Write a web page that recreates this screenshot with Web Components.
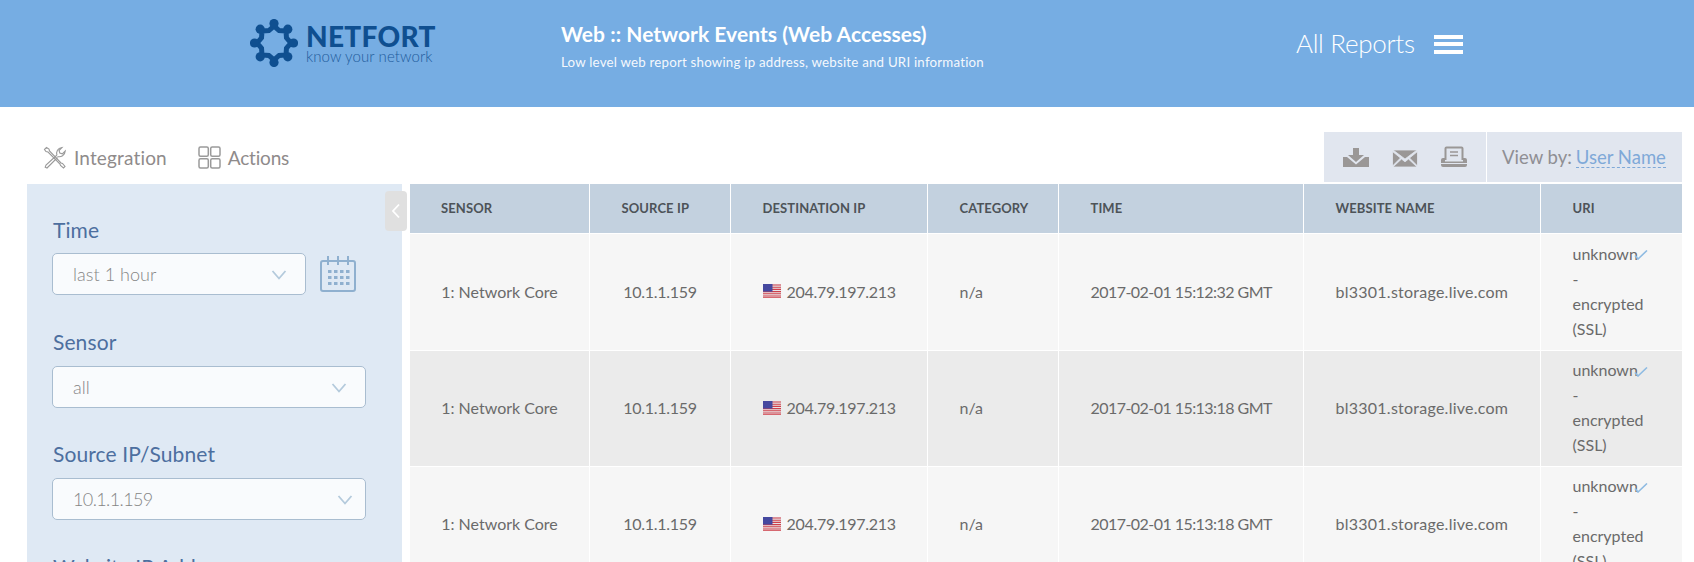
<!DOCTYPE html>
<html>
<head>
<meta charset="utf-8">
<title>Netfort</title>
<style>
	html, body { margin: 0; padding: 0; height: 562px; overflow: hidden; background: #fff; }
	body { font-family: "Lato", "Liberation Sans", sans-serif; }
</style>
</head>
<body>
<net-page>
	<net-header slot="header"
		heading="Web :: Network Events (Web Accesses)"
		sub="Low level web report showing ip address, website and URI information"></net-header>
	<net-toolbar slot="toolbar"></net-toolbar>
	<net-sidebar slot="sidebar">
		<net-field label="Time" value="last 1 hour" width="254" chevron="18" calendar></net-field>
		<net-field label="Sensor" value="all" width="314" chevron="18"></net-field>
		<net-field label="Source IP/Subnet" value="10.1.1.159" width="314" chevron="12" tight></net-field>
		<net-field label="Website IP Address" value="" width="314" chevron="12"></net-field>
	</net-sidebar>
	<net-table slot="table"></net-table>
</net-page>

<script>
class NetPage extends HTMLElement {

	constructor(){
		super();
		this.shadowDOM = this.attachShadow({
			mode: 'open'
		})
	}

	connectedCallback(){
		this.shadowDOM.innerHTML = `
			<style>
				:host { display: block; height: 562px; overflow: hidden; }
				.main { padding: 25px 12px 0 27px; }
				.content {
					display: flex;
					gap: 8px;
					margin-top: 2px;
					position: relative;
				}
				.toggle {
					position: absolute;
					left: 358px;
					top: 7px;
					width: 22px;
					height: 40px;
					border-radius: 4px;
					background: #e0e0e0;
					display: flex;
					align-items: center;
					justify-content: center;
				}
				.toggle svg { width: 10px; height: 16px; }
			</style>
			<slot name="header"></slot>
			<div class="main">
				<slot name="toolbar"></slot>
				<div class="content">
					<slot name="sidebar"></slot>
					<slot name="table"></slot>
					<div class="toggle">
						<svg viewBox="0 0 10 16"><path d="M8 1.5 2 8l6 6.5" fill="none" stroke="#fff" stroke-width="1.8"/></svg>
					</div>
				</div>
			</div>
		`
	}
}

class NetHeader extends HTMLElement {

	constructor(){
		super();
		this.shadowDOM = this.attachShadow({
			mode: 'open'
		})
	}

	connectedCallback(){
		// logo gear: ring plus eight knobs, built here to keep the markup short
		let knobs = ''
		for (let i = 0; i < 8; i++) {
			let a = i * Math.PI / 4
			let x = (24 + 19.5 * Math.sin(a)).toFixed(2)
			let y = (24 - 19.5 * Math.cos(a)).toFixed(2)
			knobs += `<circle cx="${x}" cy="${y}" r="4.6"/>`
		}
		let ring = ''
		for (let i = 0; i < 16; i++) {
			let a = i * Math.PI / 8
			let r = i % 2 ? 13.5 : 17
			ring += (24 + r * Math.sin(a)).toFixed(2) + ',' + (24 - r * Math.cos(a)).toFixed(2) + ' '
		}
		this.shadowDOM.innerHTML = `
			<style>
				:host {
					display: grid;
					grid-template-columns: 311px 735px auto;
					align-items: start;
					height: 107px;
					padding-left: 250px;
					box-sizing: border-box;
					background: #76ade3;
					color: #fff;
				}
				.logo { display: flex; gap: 8px; padding-top: 19px; color: #0f4f90; }
				.logo svg { width: 48px; height: 48px; flex: none; }
				.brand {
					font-size: 28px;
					font-weight: 900;
					letter-spacing: .3px;
					line-height: 22px;
					margin-top: 6px;
				}
				.tag { font-size: 15px; font-weight: 300; line-height: 17px; letter-spacing: .1px; margin-top: 1px; color: #1f5c9c; }
				.title { padding-top: 20px; }
				h1 { margin: 0; font-size: 21px; font-weight: 700; line-height: 28px; letter-spacing: .05px; }
				p { margin: 5px 0 0; font-size: 13.3px; font-weight: 400; line-height: 18px; letter-spacing: .21px; color: #f4f8fd; }
				.reports { display: flex; align-items: center; gap: 19px; padding-top: 25px; }
				.reports span { font-size: 26px; font-weight: 300; line-height: 36px; letter-spacing: -.3px; }
				.burger { width: 29px; display: grid; gap: 3.5px; margin-top: 2px; }
				.burger i { display: block; height: 4px; background: #fff; }
			</style>
			<div class="logo">
				<svg viewBox="0 0 48 48" fill="currentColor">
					<polygon points="${ring}" fill="none" stroke="currentColor" stroke-width="5"/>
					${knobs}
				</svg>
				<div>
					<div class="brand">NETFORT</div>
					<div class="tag">know your network</div>
				</div>
			</div>
			<div class="title">
				<h1>${this.getAttribute('heading')}</h1>
				<p>${this.getAttribute('sub')}</p>
			</div>
			<div class="reports">
				<span>All Reports</span>
				<div class="burger"><i></i><i></i><i></i></div>
			</div>
		`
	}
}

class NetToolbar extends HTMLElement {

	constructor(){
		super();
		this.shadowDOM = this.attachShadow({
			mode: 'open'
		})
	}

	connectedCallback(){
		this.shadowDOM.innerHTML = `
			<style>
				:host { display: flex; height: 50px; }
				.tabs {
					display: flex;
					gap: 31px;
					flex: 1;
					padding: 14px 0 0 16px;
					color: #8f8b8b;
					font-size: 19px;
					letter-spacing: .15px;
				}
				.tab { display: flex; align-items: center; gap: 8px; height: 22px; }
				.tab + .tab { letter-spacing: -.2px; gap: 7px; }
				.tab svg { width: 23px; height: 23px; flex: none; margin-top: 1px; }
				.box {
					background: #e1e6ef;
					display: flex;
					align-items: center;
					height: 50px;
				}
				.icons { width: 162px; gap: 23px; padding-left: 19px; box-sizing: border-box; margin-right: 1px; }
				.icons svg { height: 22px; width: 26px; flex: none; }
				.view { width: 195px; padding-left: 15px; box-sizing: border-box; color: #8f8f94; font-size: 18.5px; white-space: nowrap; }
				.view b { font-weight: 400; color: #7fa9d8; border-bottom: 1px dashed #7fa9d8; margin-left: 4px; line-height: 20px; }
			</style>
			<div class="tabs">
				<div class="tab">
					<svg viewBox="0 0 23 23" fill="none" stroke="#9a9a9a" stroke-width="1.1">
						<path d="M1.5 3.5 3.5 1.5 6 3l.5 2 11.5 12 1.500.5 2.500 3-1.500 1.500-3-2.500-.5-1.500L5 6 3 5.500z"/>
						<path d="M14 9 3 19l-.8 2.200 1.800.8L14.500 11.500M14 9c-1-3 .5-7 5-7.500l-3 3 .8 2.500 2.500.8 3-3c-.3 4.700-4.300 6.500-7.800 5.700"/>
					</svg>
					<span>Integration</span>
				</div>
				<div class="tab">
					<svg viewBox="0 0 23 23" fill="none" stroke="#9a9a9a" stroke-width="1.5">
						<rect x="1" y="1" width="9.300" height="9.300" rx="1.500"/>
						<rect x="12.700" y="1" width="9.300" height="9.300" rx="1.500"/>
						<rect x="1" y="12.700" width="9.300" height="9.300" rx="1.500"/>
						<rect x="12.700" y="12.700" width="9.300" height="9.300" rx="1.500"/>
					</svg>
					<span>Actions</span>
				</div>
			</div>
			<div class="box icons">
				<svg viewBox="0 0 26 22" fill="#9a9796">
					<path d="M10 2h6v7h5l-8 7-8-7h5z"/>
					<path d="M0 11h4v0l9 7.500L22 11h4v10H0z"/>
				</svg>
				<svg viewBox="0 0 26 22" fill="#9a9796" stroke="#e1e6ef" stroke-width=".8">
					<path d="M1 4h24L13 13z"/>
					<path d="M.5 5.500 8.500 12 .5 20z"/>
					<path d="M25.500 5.500 17.500 12l8 8z"/>
					<path d="M1 21l8.500-8 3.500 2.800 3.500-2.800 8.500 8z"/>
				</svg>
				<svg viewBox="0 0 26 22" fill="none" stroke="#9a9796" stroke-width="2">
					<path d="M4.500 14V2.500a1 1 0 0 1 1-1h15a1 1 0 0 1 1 1V14"/>
					<path d="M9 6h8M9 9.500h8" stroke-width="1.300"/>
					<path d="M2 12h2v3.500h18V12h2a2 2 0 0 1 2 2v5a2 2 0 0 1-2 2H2a2 2 0 0 1-2-2v-5a2 2 0 0 1 2-2z" fill="#9a9796" stroke="none"/>
					<path d="M0 17.500h26" stroke="#e1e6ef" stroke-width="1"/>
				</svg>
			</div>
			<div class="box view">View by: <b>User Name</b></div>
		`
	}
}

class NetSidebar extends HTMLElement {

	constructor(){
		super();
		this.shadowDOM = this.attachShadow({
			mode: 'open'
		})
	}

	connectedCallback(){
		this.shadowDOM.innerHTML = `
			<style>
				:host {
					display: block;
					width: 375px;
					height: 378px;
					flex: none;
					box-sizing: border-box;
					padding: 32px 0 0 25px;
					background: #dfe9f4;
					overflow: hidden;
				}
			</style>
			<slot></slot>
		`
	}
}

class NetField extends HTMLElement {

	constructor(){
		super();
		this.shadowDOM = this.attachShadow({
			mode: 'open'
		})
	}

	connectedCallback(){
		let calendar = ''
		if (this.hasAttribute('calendar')) {
			let dots = ''
			for (let y of [14, 20, 26]) {
				for (let x of [8, 14, 20, 26]) {
					dots += `<rect stroke="none" x="${x}" y="${y}" width="3.500" height="3" fill="#8fb0cf"/>`
				}
			}
			calendar = `
				<svg class="cal" viewBox="0 0 36 36" fill="none" stroke="#8fb0cf" stroke-width="2">
					<rect x="1" y="5" width="34" height="30" rx="2"/>
					<path d="M8 0v9M18 0v9M28 0v9"/>
					${dots}
				</svg>`
		}
		this.shadowDOM.innerHTML = `
			<style>
				:host { display: block; margin-bottom: 33px; }
				:host(:nth-child(2)) { margin-bottom: 32px; }
				:host(:first-child) label { margin-bottom: 9px; }
				label {
					display: block;
					padding-left: 1px;
					font-size: 21px;
					letter-spacing: .1px;
					line-height: 28px;
					margin-bottom: 10px;
					color: #4d6f9f;
				}
				.row { display: flex; align-items: center; gap: 14px; }
				.select {
					position: relative;
					width: ${this.getAttribute('width')}px;
					height: 42px;
					box-sizing: border-box;
					padding-left: 20px;
					border: 1px solid #a9bdd0;
					border-radius: 5px;
					background: #f9fbfd;
					color: #858585;
					font-size: 18px;
					font-weight: 300;
					line-height: 40px;
					letter-spacing: ${this.hasAttribute('tight') ? '-.6px' : '.05px'};
				}
				.chev {
					position: absolute;
					right: ${this.getAttribute('chevron')}px;
					top: 16px;
					width: 16px;
					height: 10px;
				}
				.cal { width: 36px; height: 36px; flex: none; }
			</style>
			<label>${this.getAttribute('label')}</label>
			<div class="row">
				<div class="select">
					${this.getAttribute('value')}
					<svg class="chev" viewBox="0 0 15 10"><path d="M1 1l6.500 7.500L14 1" fill="none" stroke="#b4cadc" stroke-width="1.800"/></svg>
				</div>
				${calendar}
			</div>
		`
	}
}

class NetTable extends HTMLElement {

	constructor(){
		super();
		this.shadowDOM = this.attachShadow({
			mode: 'open'
		})
	}

	connectedCallback(){
		let heads = ['Sensor', 'Source IP', 'Destination IP', 'Category', 'Time', 'Website Name', 'URI']
		let rows = [
			'2017-02-01 15:12:32 GMT',
			'2017-02-01 15:13:18 GMT',
			'2017-02-01 15:13:18 GMT'
		]
		let flag = `
			<svg class="flag" viewBox="0 0 18 14">
				<rect width="18" height="14" fill="#e8e4e6"/>
				<path d="M0 1h18M0 3.200h18M0 5.400h18M0 7.600h18M0 9.800h18M0 12h18M0 13.800h18" stroke="#cf3f4a" stroke-width="1.100"/>
				<rect width="9.500" height="7.600" fill="#45489f"/>
			</svg>`
		let body = rows.map((time, i) => `
			<div class="row ${i % 2 ? 'even' : 'odd'}">
				<div class="c mid">1: Network Core</div>
				<div class="c mid ip">10.1.1.159</div>
				<div class="c">${flag}<span class="ip">204.79.197.213</span></div>
				<div class="c">n/a</div>
				<div class="c stamp">${time}</div>
				<div class="c site">bl3301.storage.live.com</div>
				<div class="c uri"><div>unknown - encrypted (SSL)</div>
					<svg class="tick" viewBox="0 0 14 10"><path d="M1 5.500l3 3.500 9-8.500" fill="none" stroke="#8fbbe2" stroke-width="1.600"/></svg>
				</div>
			</div>
		`).join('')
		this.shadowDOM.innerHTML = `
			<style>
				:host { display: block; width: 1272px; flex: none; }
				.row {
					display: grid;
					grid-template-columns: 179px 140px 196px 130px 244px 236px 141px;
					gap: 1px;
					margin-bottom: 1px;
					height: 115px;
					font-size: 16px;
					line-height: 25px;
					color: #6a6a6a;
				}
				.row.odd:nth-of-type(2) { height: 116px; }
				.head { height: 49px; }
				.h {
					background: #c3d1df;
					color: #4d5358;
					font-size: 13px;
					font-weight: 700;
					letter-spacing: .1px;
					text-transform: uppercase;
					padding-left: 31.5px;
					display: flex;
					align-items: center;
				}
				.h:first-child { padding-left: 31px; }
				.c {
					padding: 0 0 2px 31.5px;
					display: flex;
					align-items: center;
					white-space: nowrap;
				}
				.mid { padding-left: 0; justify-content: center; }
				.ip { letter-spacing: -.3px; }
				.stamp { letter-spacing: -.55px; }
				.site { letter-spacing: .25px; }
				.odd .c { background: #f6f6f6; }
				.even .c { background: #ebebeb; }
				.uri {
					position: relative;
					display: block;
					white-space: normal;
					padding: 6px 0 0 31.5px;
					overflow: hidden;
				}
				.row.odd:nth-of-type(2) .uri { padding-top: 7px; }
				.uri div { width: min-content; }
				.flag { width: 18px; height: 14px; margin-right: 6px; flex: none; }
				.tick { position: absolute; right: 34px; top: 16px; width: 14px; height: 10px; }
			</style>
			<div class="row head">
				${heads.map(h => `<div class="h">${h}</div>`).join('')}
			</div>
			${body}
		`
	}
}

customElements.define('net-page', NetPage)
customElements.define('net-header', NetHeader)
customElements.define('net-toolbar', NetToolbar)
customElements.define('net-sidebar', NetSidebar)
customElements.define('net-field', NetField)
customElements.define('net-table', NetTable)
</script>
</body>
</html>
